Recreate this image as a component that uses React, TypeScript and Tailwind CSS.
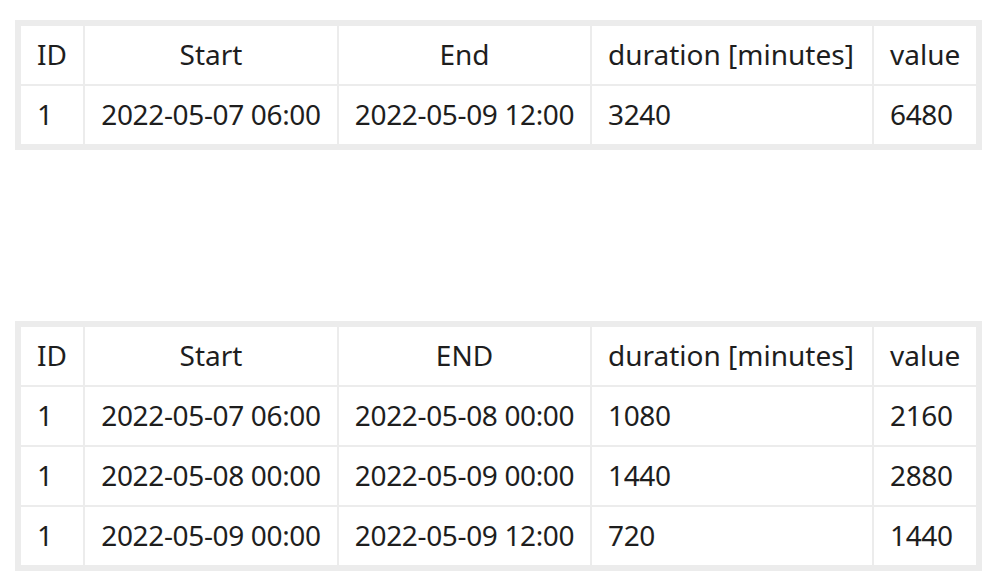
import React from "react";

type Align = "left" | "center";
const cols: { w: string; align: Align }[] = [
  { w: "w-[62px]", align: "left" },
  { w: "w-[252px]", align: "center" },
  { w: "w-[251px]", align: "center" },
  { w: "w-[280px]", align: "left" },
  { w: "w-[102px]", align: "left" },
];

function Table({ header, rows }: { header: string[]; rows: string[][] }) {
  const all = [header, ...rows];
  return (
    <div className="ml-[15px] w-[967px] bg-[#ececec] p-[6px] flex flex-col gap-[2px]">
      {all.map((r, i) => (
        <div key={i} className={`flex gap-[2px] ${i > 0 ? "tracking-[-0.35px]" : ""}`}>
          {r.map((c, j) => (
            <div
              key={j}
              className={`${cols[j].w} h-[58px] bg-white flex items-center px-[16px] pb-[3px] ${
                cols[j].align === "center" ? "justify-center" : "justify-start"
              }`}
            >
              <span className="whitespace-nowrap">{c}</span>
            </div>
          ))}
        </div>
      ))}
    </div>
  );
}

export default function App() {
  return (
    <div
      className="w-[991px] h-[578px] bg-white text-[28px] leading-none text-[#1e1e1e] overflow-hidden"
      style={{ fontFamily: '"Noto Sans", "Open Sans", sans-serif' }}
    >
      <div className="pt-[20px]">
        <Table
          header={["ID", "Start", "End", "duration [minutes]", "value"]}
          rows={[["1", "2022-05-07 06:00", "2022-05-09 12:00", "3240", "6480"]]}
        />
      </div>
      <div className="pt-[171px]">
        <Table
          header={["ID", "Start", "END", "duration [minutes]", "value"]}
          rows={[
            ["1", "2022-05-07 06:00", "2022-05-08 00:00", "1080", "2160"],
            ["1", "2022-05-08 00:00", "2022-05-09 00:00", "1440", "2880"],
            ["1", "2022-05-09 00:00", "2022-05-09 12:00", "720", "1440"],
          ]}
        />
      </div>
    </div>
  );
}
